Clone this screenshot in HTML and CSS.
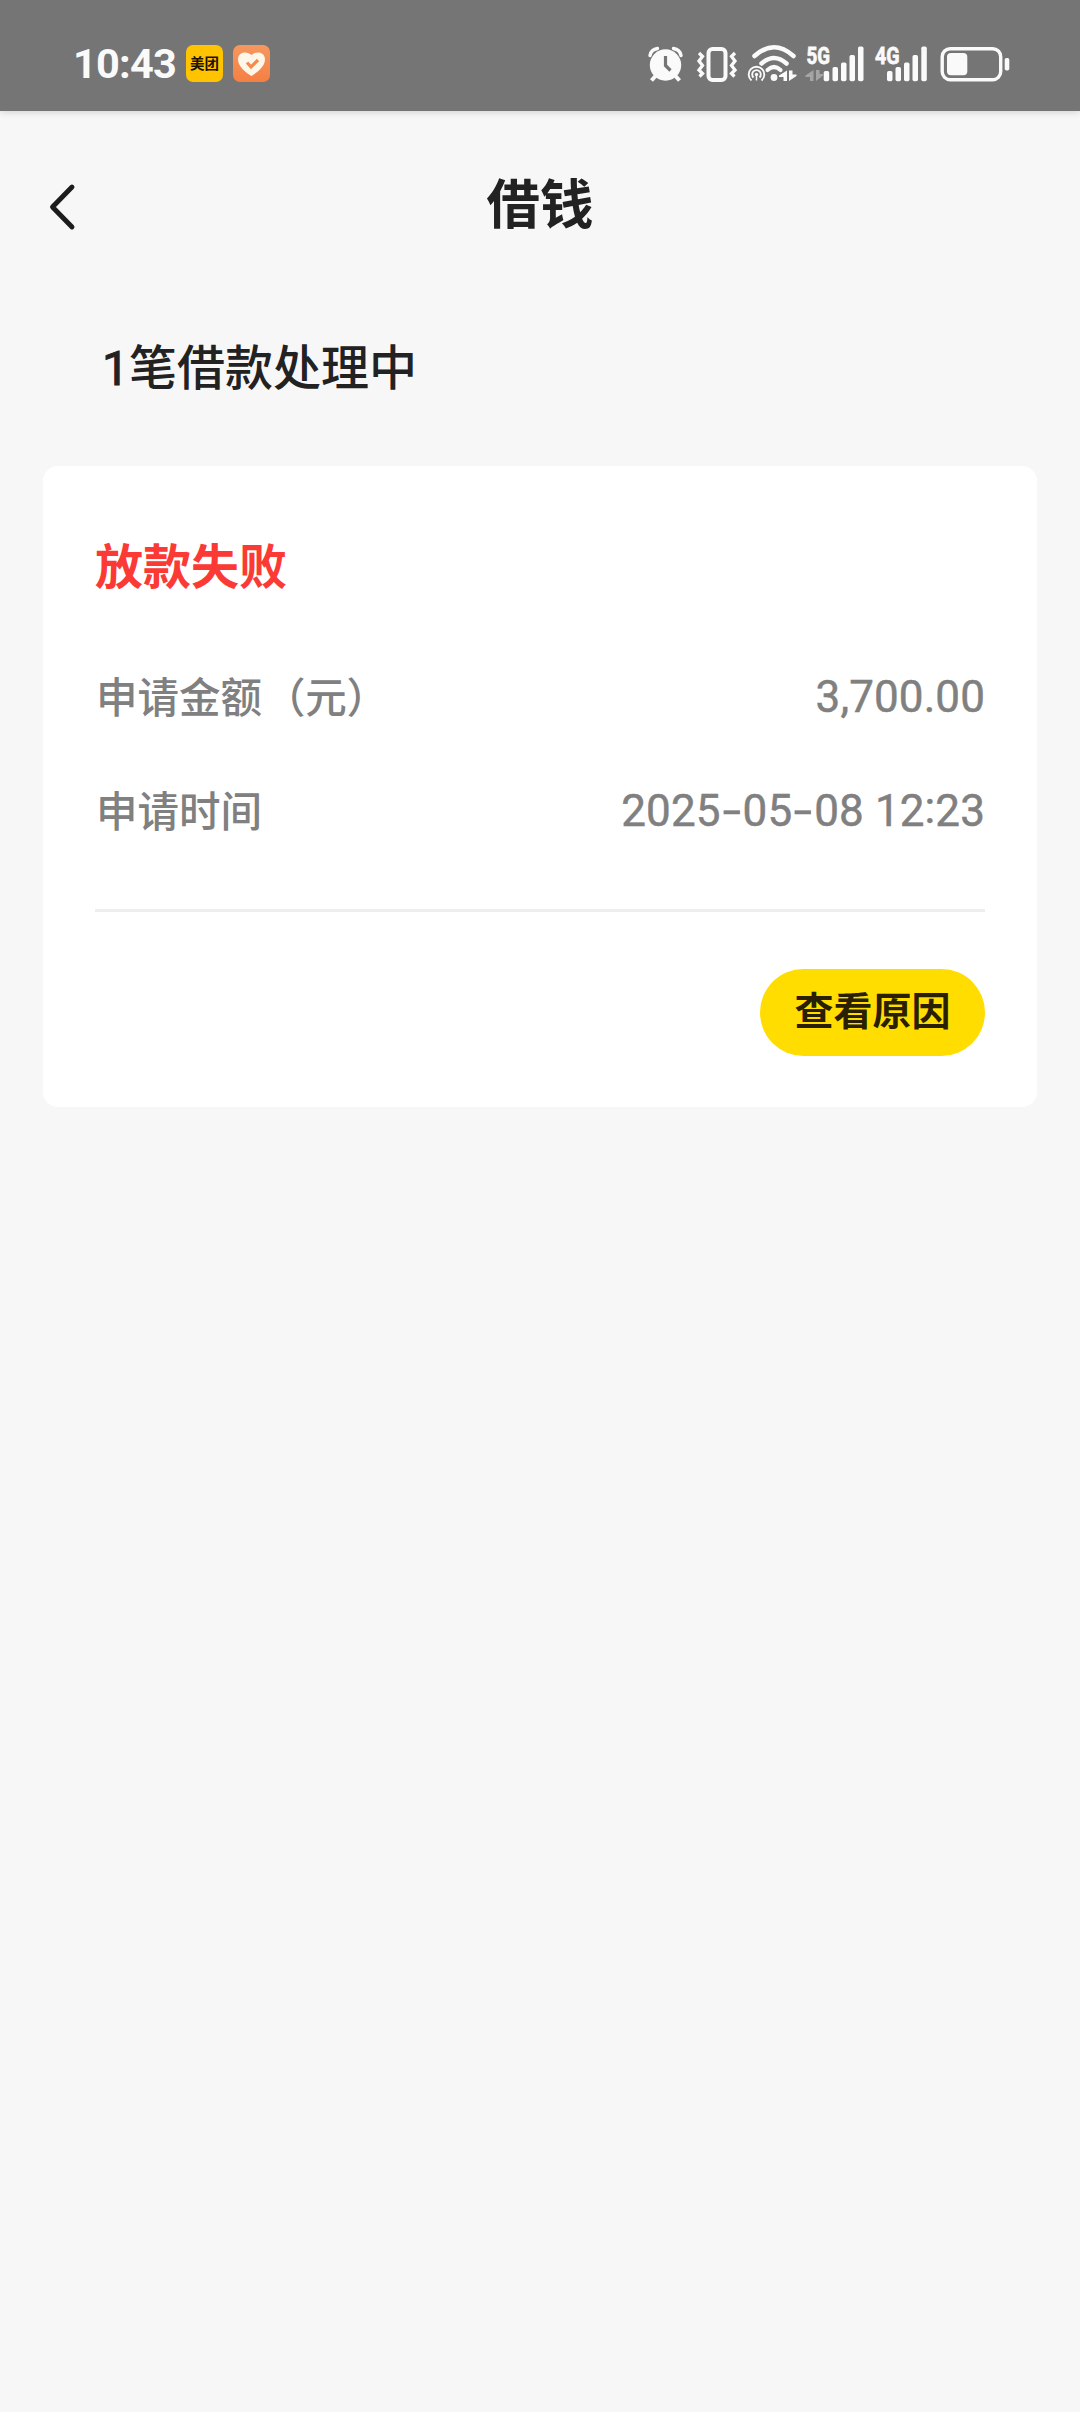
FILE: index.html
```html
<!DOCTYPE html>
<html lang="zh-CN">
<head>
<meta charset="utf-8">
<title>借钱</title>
<link rel="stylesheet" href="styles.css">
</head>
<body>
<div class="status">
  <span class="clock">10:43</span>
  <span class="app app-meituan">美团</span>
  <span class="app app-heart">
    <svg width="37" height="37" viewBox="0 0 37 37"><path d="M18.500 31C12 27 5 21 5 14.500C5 7 13.500 5.500 18.500 10C23.500 5.500 32 7 32 14.500C32 21 25 27 18.500 31Z" fill="#fff6ea"/><path d="M14 17.500l4 4.500 7-7" fill="none" stroke="#f58a4b" stroke-width="3.200"/></svg>
  </span>
  <div class="indicators">
    <svg class="alarm" width="36" height="36" viewBox="648 45 36 36">
      <circle cx="665.500" cy="64" r="15.700" fill="#fafafa"/>
      <path d="M650 54.500q1-6 7.500-7M681 54.500q-1-6-7.500-7" fill="none" stroke="#fafafa" stroke-width="3.400" stroke-linecap="round"/>
      <path d="M655.500 75l-4 4.500M675.500 75l4 4.500" stroke="#fafafa" stroke-width="4"/>
      <path d="M665.500 55v9.500l5 5" fill="none" stroke="#757575" stroke-width="3.200"/>
    </svg>
    <svg class="vibrate" width="42" height="36" viewBox="696 45 42 36">
      <rect x="708.500" y="48" width="17" height="31" rx="4" fill="none" stroke="#fafafa" stroke-width="4"/>
      <path d="M699 52l3.500 3.500-3.500 4.500 3.500 4.500-3.500 4.500 3.500 3.500-3 3M735 52l-3.500 3.500 3.500 4.500-3.500 4.500 3.500 4.500-3.500 3.500 3 3" fill="none" stroke="#fafafa" stroke-width="3.300"/>
    </svg>
    <svg class="wifi" width="50" height="37" viewBox="747 44 50 37">
      <g fill="none" stroke="#fafafa" stroke-linecap="round">
        <path d="M754.500 55Q774 37.500 793.500 55" stroke-width="4.500"/>
        <path d="M761.500 62.500Q774 51.500 786.500 62.500" stroke-width="4.500"/>
        <path d="M767.500 69Q774 63 780.500 69" stroke-width="4.200"/>
      </g>
      <circle cx="756.500" cy="73" r="9.500" fill="#757575"/>
      <path d="M751.500 79.500a7.800 7.800 0 1 1 10 0M753.500 76.500a4.300 4.300 0 1 1 6 0" fill="none" stroke="#fafafa" stroke-width="1.900"/>
      <circle cx="756.500" cy="73.500" r="1.700" fill="#fafafa"/>
      <path d="M756.500 73.500v6" stroke="#fafafa" stroke-width="1.500"/>
      <circle cx="774" cy="76.500" r="3.400" fill="#fafafa"/>
      <path d="M787 69.500v10.500h-3.500v-4h-4.500v-1.500zM789 80v-10.500h3.500v4h4v1.500z" fill="#fafafa"/>
    </svg>
    <svg class="signal-five" width="60" height="37" viewBox="805 44 60 37">
      <text class="network" x="806.500" y="63" textLength="23.500" lengthAdjust="spacingAndGlyphs">5G</text>
      <path d="M813.500 69v11h-3.500v-4h-4.500v-1.500zM816 80v-11h3.500v4h3.500v1.500z" fill="#a5a5a5"/>
      <g fill="#fafafa"><rect x="823.700" y="70" width="5.500" height="10.300" rx="1.700"/><rect x="832.500" y="66" width="5.500" height="14.300" rx="1.700"/><rect x="841" y="61.500" width="5.500" height="18.800" rx="1.700"/><rect x="849.500" y="54" width="5.500" height="26.300" rx="1.700"/><rect x="858" y="45.500" width="5.500" height="34.800" rx="1.700"/></g>
    </svg>
    <svg class="signal-four" width="54" height="37" viewBox="874 44 54 37">
      <text class="network" x="875" y="63" textLength="24.500" lengthAdjust="spacingAndGlyphs">4G</text>
      <g fill="#fafafa"><rect x="887" y="70" width="5.500" height="10.300" rx="1.700"/><rect x="895.500" y="66" width="5.500" height="14.300" rx="1.700"/><rect x="904" y="61.500" width="5.500" height="18.800" rx="1.700"/><rect x="912.500" y="54" width="5.500" height="26.300" rx="1.700"/><rect x="921.300" y="45.500" width="5.500" height="34.800" rx="1.700"/></g>
    </svg>
    <svg class="battery" width="70" height="36" viewBox="940 45 70 36">
      <rect x="942.200" y="47.700" width="58.500" height="31" rx="8" fill="none" stroke="#fafafa" stroke-width="3.400"/>
      <rect x="947" y="52" width="20.300" height="22.300" rx="4" fill="#fafafa"/>
      <rect x="1004.700" y="57" width="4.600" height="12.500" rx="1.800" fill="#fafafa"/>
    </svg>
  </div>
</div>
<header class="navbar">
  <svg class="back" width="28" height="48" viewBox="0 0 28 48"><path d="M24 4L4.500 24L24 44" fill="none" stroke="#1c1c1c" stroke-width="4.900" stroke-linecap="round" stroke-linejoin="round"/></svg>
  <h1 class="title">借钱</h1>
</header>
<h2 class="summary"><span class="count">1</span>笔借款处理中</h2>
<section class="card">
  <h3 class="result">放款失败</h3>
  <div class="row"><span class="label">申请金额<span class="unit">（元）</span></span><span class="value">3,700.00</span></div>
  <div class="row"><span class="label">申请时间</span><span class="value">2025<span class="dash">-</span>05<span class="dash">-</span>08 12<span class="colon">:</span>23</span></div>
  <div class="actions"><button class="reason">查看原因</button></div>
</section>
</body>
</html>
```
FILE: styles.css
```css
* { box-sizing: border-box; }
body {
  margin: 0;
  min-height: 2412px;
  background: #f7f7f7;
  color: #222;
  font-family: Roboto, "Noto Sans CJK SC", sans-serif;
}
h1, h2, h3 { margin: 0; }
svg { display: block; flex: none; overflow: visible; }

.status {
  display: flex;
  align-items: center;
  height: 111px;
  padding: 16px 70px 0 73px;
  background: #757575;
  box-shadow: 0 1px 7px rgba(0, 0, 0, .16);
}
.clock {
  width: 113px;
  color: #fafafa;
  font-size: 41.5px;
  font-weight: 700;
  letter-spacing: -.8px;
  line-height: 48px;
}
.app {
  width: 37px;
  height: 37px;
  margin-right: 10px;
  border-radius: 7px;
}
.app-meituan {
  background: #ffc300;
  color: #1c1200;
  font: 700 14.5px/36px "Noto Sans CJK SC", sans-serif;
  text-align: center;
}
.app-heart { background: linear-gradient(#f5985f, #f57f43); }
.indicators {
  display: flex;
  align-items: center;
  margin-left: auto;
}
.vibrate { margin-left: 12px; }
.wifi { margin-left: 9px; }
.signal-five { margin-left: 8px; }
.signal-four { margin-left: 9px; }
.battery { margin-left: 12px; }
.network {
  fill: #fafafa;
  stroke: #fafafa;
  stroke-width: .8px;
  font: 700 23.5px/1 Roboto, sans-serif;
}

.navbar {
  display: grid;
  grid-template-columns: 200px 1fr 200px;
  align-items: center;
  height: 191px;
}
.back { margin-left: 48px; }
.title {
  padding-bottom: 12px;
  font: 700 53.5px/80px "Noto Sans CJK SC", sans-serif;
  text-align: center;
}
.summary {
  height: 164px;
  padding: 32px 0 0 102px;
  font-size: 48px;
  font-weight: 500;
  line-height: 70px;
}
.count {
  font-weight: 400;
  -webkit-text-stroke: 1px #222;
}

.card {
  height: 641px;
  margin: 0 43px;
  padding: 67px 52px 0 53px;
  border-radius: 15px;
  background: #fff;
}
.result {
  margin: 0 0 40px -1px;
  color: #fb3a35;
  font-size: 48px;
  font-weight: 700;
  line-height: 70px;
}
.row {
  display: flex;
  justify-content: space-between;
  height: 114px;
  color: #808080;
}
.label {
  font-size: 41.5px;
  font-weight: 500;
  line-height: 112px;
}
.unit { margin-left: 2px; letter-spacing: -.3px; }
.value {
  font-size: 44px;
  letter-spacing: .1px;
  line-height: 109px;
  -webkit-text-stroke: .5px #808080;
}
.dash {
  display: inline-block;
  width: 22px;
  text-align: center;
  transform: scaleX(1.5);
}
.colon { display: inline-block; transform: translateY(-3px); }
.actions {
  display: flex;
  justify-content: flex-end;
  margin: 38px 0 0 -1px;
  padding-top: 57px;
  border-top: 3px solid #eee;
}
.reason {
  width: 225px;
  height: 87px;
  padding: 0 0 8px;
  border: 0;
  border-radius: 44px;
  background: #fd0;
  color: #2a1f00;
  font: 700 39px/79px "Noto Sans CJK SC", sans-serif;
}
```
